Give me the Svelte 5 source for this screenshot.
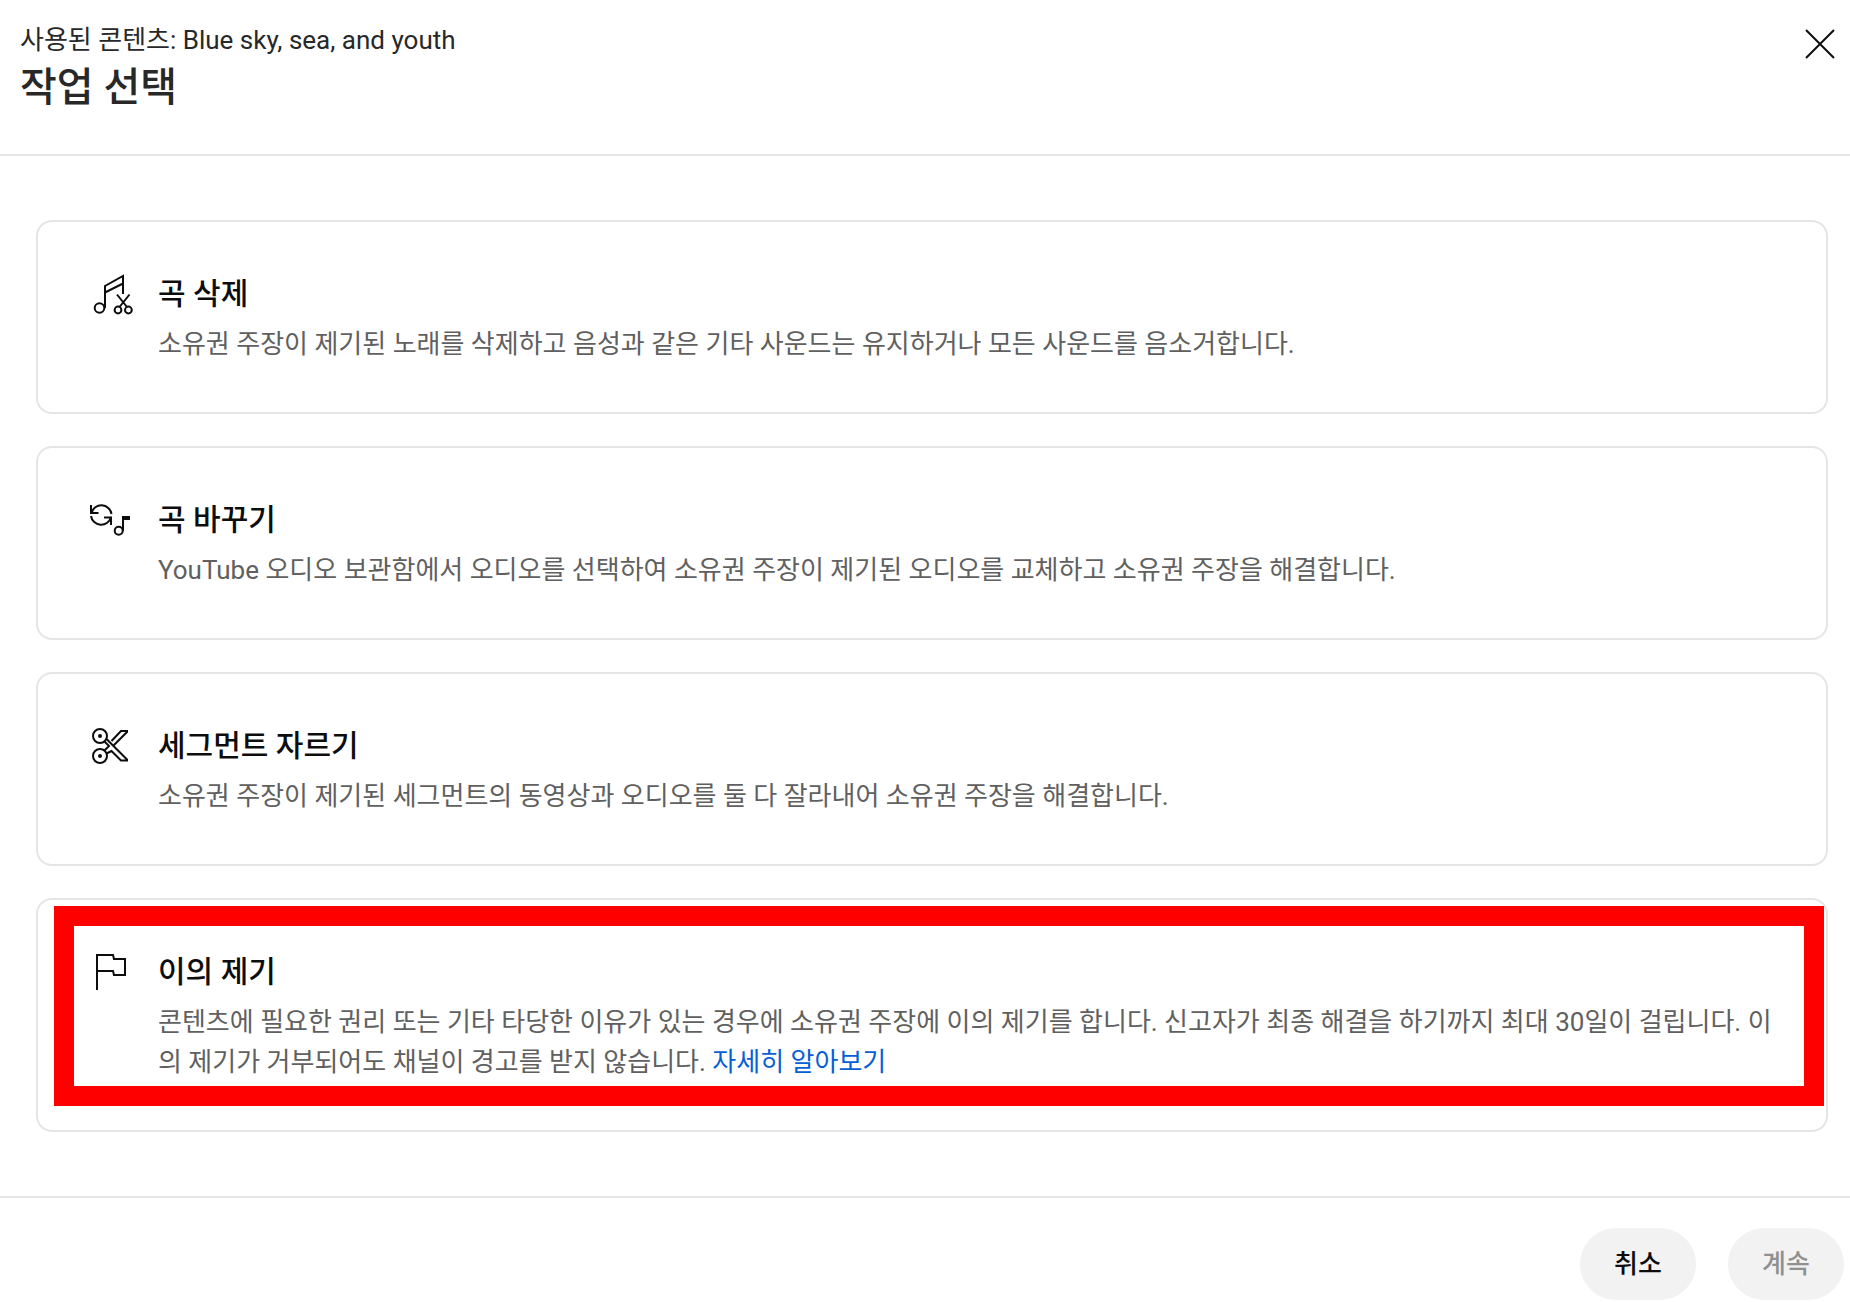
<script lang="ts">
  type Action = {
    id: string
    title: string
    text: string
    highlighted?: boolean
  }

  const actions: Action[] = [
    {
      id: "erase",
      title: "곡 삭제",
      text: "소유권 주장이 제기된 노래를 삭제하고 음성과 같은 기타 사운드는 유지하거나 모든 사운드를 음소거합니다.",
    },
    {
      id: "replace",
      title: "곡 바꾸기",
      text: "YouTube 오디오 보관함에서 오디오를 선택하여 소유권 주장이 제기된 오디오를 교체하고 소유권 주장을 해결합니다.",
    },
    {
      id: "trim",
      title: "세그먼트 자르기",
      text: "소유권 주장이 제기된 세그먼트의 동영상과 오디오를 둘 다 잘라내어 소유권 주장을 해결합니다.",
    },
    {
      id: "dispute",
      title: "이의 제기",
      text: "콘텐츠에 필요한 권리 또는 기타 타당한 이유가 있는 경우에 소유권 주장에 이의 제기를 합니다. 신고자가 최종 해결을 하기까지 최대 30일이 걸립니다. 이의 제기가 거부되어도 채널이 경고를 받지 않습니다.",
      highlighted: true,
    },
  ]

  let selected: string | undefined = $state()
</script>

<div class="dialog">
  <header>
    <div>
      <p class="content-name">사용된 콘텐츠: Blue sky, sea, and youth</p>
      <h1>작업 선택</h1>
    </div>
    <button class="close" aria-label="닫기">
      <svg viewBox="0 0 48 48"><path d="M10 10 38 38M38 10 10 38" /></svg>
    </button>
  </header>

  <main>
    {#each actions as action (action.id)}
      <section class="card">
        <svg class="icon" viewBox="0 0 48 48" aria-hidden="true">
          {#if action.id === "erase"}
            <circle cx="13.5" cy="38" r="4.8" />
            <path d="M19 38V16L37 6V24M19 22.5 37 13.5" />
            <circle cx="32" cy="40" r="3.4" />
            <circle cx="42.4" cy="40" r="3.4" />
            <path d="M31 24.5 41 37M43.5 24.5 33.5 37" />
          {:else if action.id === "replace"}
            <path d="M5.5 17A10.2 10.2 0 0 1 25.5 18M25 21A10.2 10.2 0 0 1 5 20" />
            <path d="M5 9V17H12.5M18 21.5H25V29" />
            <circle cx="32.7" cy="34.7" r="4" />
            <path d="M37 35V21" />
            <path class="solid" d="M36 20H44V24H36Z" />
          {:else if action.id === "trim"}
            <circle cx="14" cy="14" r="7" />
            <circle cx="14" cy="34" r="7" />
            <circle class="solid" cx="14" cy="14" r="2" />
            <circle class="solid" cx="14" cy="34" r="2" />
            <path d="M18.5 19.5 23 24 18.5 28.5M20.5 17 41 37.5V38.5H35L25.5 29 20.5 31.5M25.5 19 35 9H41V10L28 23" />
          {:else}
            <path d="M11 42V7H27L28 11H39V27H28L27 23H11" />
          {/if}
        </svg>
        <div class="body">
          <h2><button onclick={() => (selected = action.id)}>{action.title}</button></h2>
          <p>
            {action.text}
            {#if action.id === "dispute"}
              <a href="#learn-more">자세히 알아보기</a>
            {/if}
          </p>
        </div>
        {#if action.highlighted}
          <div class="highlight"></div>
        {/if}
      </section>
    {/each}
  </main>

  <footer>
    <button class="pill">취소</button>
    <button class="pill" disabled={!selected}>계속</button>
  </footer>
</div>

<style>
  :global(body) {
    margin: 0;
    background: #fff;
  }

  .dialog {
    font-family: Roboto, "Noto Sans CJK KR", sans-serif;
    font-size: 26px;
    line-height: 40px;
    color: #0d0d0d;
  }

  h1, h2, p {
    margin: 0;
    font-weight: 500;
  }

  button {
    padding: 0;
    border: none;
    background: none;
    font: inherit;
    color: inherit;
    cursor: pointer;
  }

  svg {
    display: block;
    width: 48px;
    height: 48px;
    fill: none;
    stroke: #0d0d0d;
    stroke-width: 2;
  }

  .solid {
    fill: #0d0d0d;
    stroke: none;
  }

  header {
    display: flex;
    justify-content: space-between;
    align-items: flex-start;
    padding: 20px 6px 38px 20px;
    border-bottom: 2px solid #e5e5e5;
  }

  .content-name {
    font-weight: 400;
    color: #282828;
  }

  h1 {
    font-size: 40px;
    line-height: 56px;
    color: #282828;
  }

  main {
    display: flex;
    flex-direction: column;
    gap: 32px;
    padding: 64px 22px 64px 36px;
  }

  .card {
    position: relative;
    display: flex;
    gap: 24px;
    padding: 48px;
    border: 2px solid #e5e5e5;
    border-radius: 16px;
  }

  .icon {
    flex-shrink: 0;
  }

  h2 {
    margin-bottom: 6px;
    font-size: 30px;
    line-height: 48px;
  }

  .card p {
    font-weight: 400;
    color: #606060;
  }

  a {
    color: #065fd4;
    text-decoration: none;
  }

  .highlight {
    position: absolute;
    inset: 6px 2px 24px 16px;
    border: 20px solid #f00;
    pointer-events: none;
  }

  footer {
    display: flex;
    justify-content: flex-end;
    gap: 32px;
    padding: 30px 6px 2px;
    border-top: 2px solid #e5e5e5;
  }

  .pill {
    height: 72px;
    min-width: 116px;
    padding: 0 32px;
    border-radius: 36px;
    background: #f2f2f2;
    font-weight: 500;
  }

  .pill:disabled {
    color: #909090;
    cursor: default;
  }
</style>
